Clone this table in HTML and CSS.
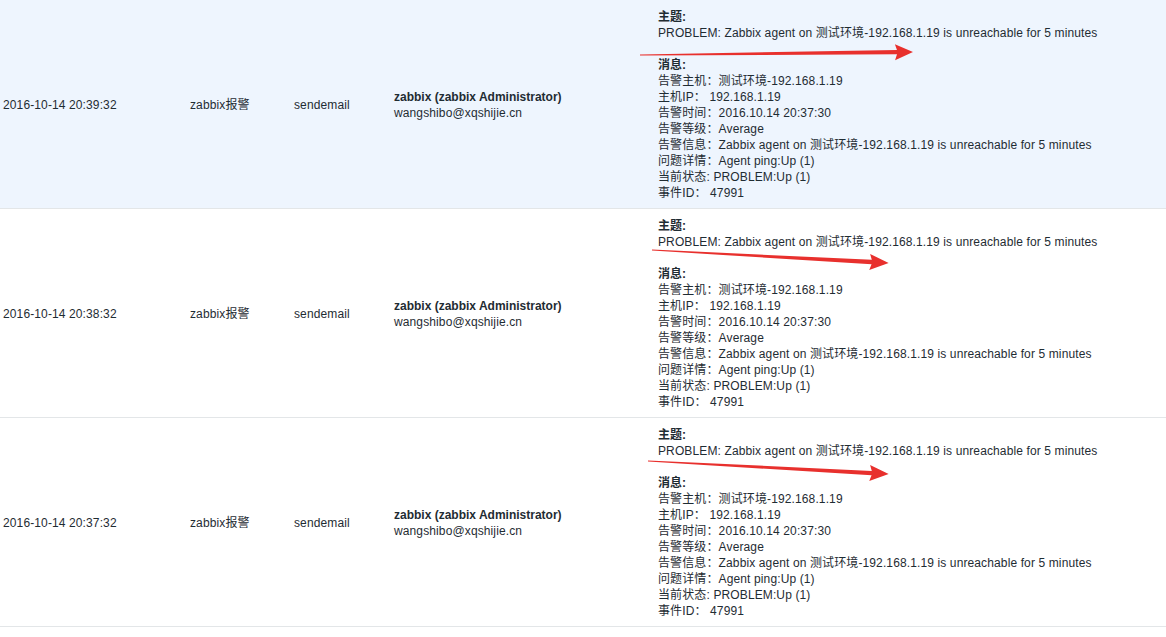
FILE: index.html
```html
<!DOCTYPE html>
<html>
<head>
<meta charset="utf-8">
<link rel="stylesheet" href="styles.css">
</head>
<body>
<div class="list">
  <div class="row row-hl">
    <div class="c c-date">2016-10-14 20:39:32</div>
    <div class="c c-type">zabbix报警</div>
    <div class="c c-media">sendemail</div>
    <div class="c c-user"><b>zabbix (zabbix Administrator)</b><br>wangshibo@xqshijie.cn</div>
    <div class="c c-msg">
      <b>主题:</b><br>PROBLEM: Zabbix agent on 测试环境-192.168.1.19 is unreachable for 5 minutes<br><br>
      <b>消息:</b><br>告警主机：测试环境-192.168.1.19<br>主机IP： 192.168.1.19<br>告警时间：2016.10.14 20:37:30<br>告警等级：Average<br>告警信息：Zabbix agent on 测试环境-192.168.1.19 is unreachable for 5 minutes<br>问题详情：Agent ping:Up (1)<br>当前状态: PROBLEM:Up (1)<br>事件ID： 47991
    </div>
    <svg class="arrow" width="1166" height="209" viewBox="0 0 1166 209">
      <g transform="translate(640 55) rotate(-0.63)">
        <polygon points="0,-0.6 257,-2.2 255,-8 273,0 255,8 257,2.2 0,0.6"/>
      </g>
    </svg>
  </div>
  <div class="row">
    <div class="c c-date">2016-10-14 20:38:32</div>
    <div class="c c-type">zabbix报警</div>
    <div class="c c-media">sendemail</div>
    <div class="c c-user"><b>zabbix (zabbix Administrator)</b><br>wangshibo@xqshijie.cn</div>
    <div class="c c-msg">
      <b>主题:</b><br>PROBLEM: Zabbix agent on 测试环境-192.168.1.19 is unreachable for 5 minutes<br><br>
      <b>消息:</b><br>告警主机：测试环境-192.168.1.19<br>主机IP： 192.168.1.19<br>告警时间：2016.10.14 20:37:30<br>告警等级：Average<br>告警信息：Zabbix agent on 测试环境-192.168.1.19 is unreachable for 5 minutes<br>问题详情：Agent ping:Up (1)<br>当前状态: PROBLEM:Up (1)<br>事件ID： 47991
    </div>
    <svg class="arrow" width="1166" height="209" viewBox="0 0 1166 209">
      <g transform="translate(652 41) rotate(3.14)">
        <polygon points="0,-0.6 220,-2.2 218,-8 237,0 218,8 220,2.2 0,0.6"/>
      </g>
    </svg>
  </div>
  <div class="row">
    <div class="c c-date">2016-10-14 20:37:32</div>
    <div class="c c-type">zabbix报警</div>
    <div class="c c-media">sendemail</div>
    <div class="c c-user"><b>zabbix (zabbix Administrator)</b><br>wangshibo@xqshijie.cn</div>
    <div class="c c-msg">
      <b>主题:</b><br>PROBLEM: Zabbix agent on 测试环境-192.168.1.19 is unreachable for 5 minutes<br><br>
      <b>消息:</b><br>告警主机：测试环境-192.168.1.19<br>主机IP： 192.168.1.19<br>告警时间：2016.10.14 20:37:30<br>告警等级：Average<br>告警信息：Zabbix agent on 测试环境-192.168.1.19 is unreachable for 5 minutes<br>问题详情：Agent ping:Up (1)<br>当前状态: PROBLEM:Up (1)<br>事件ID： 47991
    </div>
    <svg class="arrow" width="1166" height="209" viewBox="0 0 1166 209">
      <g transform="translate(648 43) rotate(3.09)">
        <polygon points="0,-0.6 224,-2.2 222,-8 241,0 222,8 224,2.2 0,0.6"/>
      </g>
    </svg>
  </div>
</div>
</body>
</html>
```
FILE: styles.css
```css
html, body {
  margin: 0;
  padding: 0;
  background: #ffffff;
}
body {
  font-family: "Liberation Sans", Arial, "Noto Sans CJK SC", sans-serif;
  font-size: 12px;
  line-height: 16px;
  color: #1f2c33;
  width: 1166px;
  height: 637px;
  overflow: hidden;
}
.list {
  display: flex;
  flex-direction: column;
}
.row {
  position: relative;
  display: grid;
  grid-template-columns: 187px 104px 100px 264px 1fr;
  align-items: center;
  height: 208px;
  border-bottom: 1px solid #e3e6e8;
}
.row-hl {
  background: #eef5fe;
}
.c {
  padding: 2px 3px 0;
  white-space: nowrap;
  letter-spacing: 0.12px;
}
.c-msg {
  padding: 9px 3px 7px;
}
.c b {
  font-weight: bold;
  letter-spacing: 0;
}
.arrow {
  position: absolute;
  left: 0;
  top: 0;
  pointer-events: none;
}
.arrow polygon {
  fill: #e8302d;
}
```
